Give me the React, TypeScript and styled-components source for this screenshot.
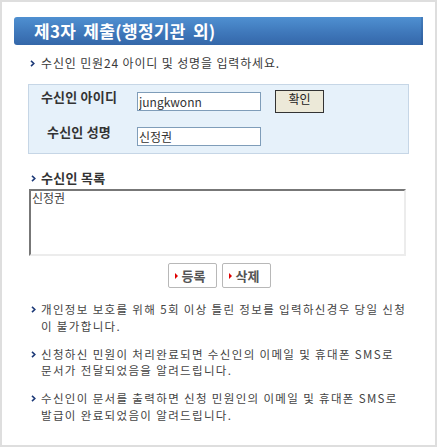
import React from 'react';
import styled, { createGlobalStyle } from 'styled-components';

const GlobalStyle = createGlobalStyle`
  html, body {
    margin: 0;
    padding: 0;
    background: #fff;
  }
  body {
    font-family: "Noto Sans CJK KR", "Noto Sans", sans-serif;
    font-size: 12px;
    color: #333;
  }
`;

const Frame = styled.div`
  box-sizing: border-box;
  width: 437px;
  height: 447px;
  border: 2px solid #dedede;
  padding: 15px 12px 0;
`;

const TitleBar = styled.div`
  height: 28px;
  border-radius: 3px 0 0 3px;
  background: linear-gradient(to bottom, #4f90d1 0%, #3f78bb 55%, #3467a9 100%);
  box-shadow: inset -2px 0 0 rgba(20, 50, 100, 0.18);
  display: flex;
  align-items: center;
  padding-left: 20px;
`;

const Title = styled.h1`
  margin: 0;
  font-size: 17px;
  font-weight: 700;
  color: #fff;
  letter-spacing: 0.3px;
  word-spacing: 3px;
  line-height: 28px;
`;

const Content = styled.div`
  margin: 0 14px;
`;

const Bulleted = styled.div<{ $bold?: boolean; $mt?: number }>`
  display: flex;
  align-items: flex-start;
  margin-top: ${p => p.$mt ?? 0}px;
  font-size: ${p => (p.$bold ? 13 : 12)}px;
  font-weight: ${p => (p.$bold ? 700 : 400)};
  letter-spacing: ${p => (p.$bold ? 0.3 : 0.85)}px;
  color: ${p => (p.$bold ? '#333' : '#3a3a3a')};
  line-height: 16px;
  white-space: nowrap;
`;

const Mark = styled.span<{ $x?: number; $h?: number }>`
  flex: 0 0 13px;
  display: flex;
  align-items: center;
  height: ${p => p.$h ?? 16}px;
  padding-left: ${p => p.$x ?? 2}px;
  box-sizing: border-box;
`;

const Chevron: React.FC<{ x?: number; h?: number }> = ({ x, h }) => (
  <Mark $x={x} $h={h}>
    <svg width="5" height="7" viewBox="0 0 5 7">
      <polyline points="1,0.8 3.8,3.5 1,6.2" fill="none" stroke="#1d3a78" strokeWidth="1.6" />
    </svg>
  </Mark>
);

const FormBox = styled.div`
  margin-top: 13px;
  height: 70px;
  box-sizing: border-box;
  border: 1px solid #c6d6e6;
  background: #e6f1fa;
  padding: 5px 0;
  display: grid;
  grid-template-columns: 100px 124px 49px;
  grid-auto-rows: 23px;
  column-gap: 8px;
  row-gap: 12px;
`;

const Label = styled.label`
  align-self: start;
  text-align: center;
  font-size: 13px;
  font-weight: 700;
  line-height: 14px;
  color: #333;
  letter-spacing: 0.2px;
`;

const TextInput = styled.input`
  align-self: center;
  box-sizing: border-box;
  width: 124px;
  height: 19px;
  margin: 0;
  padding: 0 1px;
  border: 1px solid #7f9db9;
  background: #fff;
  font-family: "Noto Sans CJK KR", "Noto Sans", sans-serif;
  font-size: 12px;
  color: #333;
  outline: none;
`;

const ConfirmButton = styled.button`
  margin-left: 6px;
  box-sizing: border-box;
  width: 49px;
  height: 23px;
  padding: 0 0 6px;
  border: 1px solid #333;
  background: #ece9d8;
  font-family: "Noto Sans CJK KR", "Noto Sans", sans-serif;
  font-size: 12px;
  line-height: 14px;
  color: #222;
`;

const ListBox = styled.textarea`
  display: block;
  box-sizing: border-box;
  margin: 3px 0 0 1px;
  width: 377px;
  height: 67px;
  padding: 0 1px;
  resize: none;
  border: 2px solid;
  border-color: #777 #ececec #ececec #777;
  background: #fff;
  font-family: "Noto Sans CJK KR", "Noto Sans", sans-serif;
  font-size: 12px;
  line-height: 14px;
  color: #444;
  outline: none;
`;

const ButtonRow = styled.div`
  display: flex;
  justify-content: center;
  gap: 5px;
  margin-top: 7px;
  padding-left: 1px;
`;

const ActionButton = styled.button`
  box-sizing: border-box;
  width: 49px;
  height: 25px;
  padding: 0 0 0 6px;
  display: flex;
  align-items: center;
  gap: 4px;
  border: 1px solid #b8b8b8;
  border-radius: 2px;
  background: #fff;
  font-family: "Noto Sans CJK KR", "Noto Sans", sans-serif;
  font-size: 13px;
  font-weight: 700;
  color: #555;
`;

const RedArrow = () => (
  <svg width="3" height="6" viewBox="0 0 3 6">
    <polygon points="0,0 3,3 0,6" fill="#e00000" />
  </svg>
);

const Notes = styled.div`
  margin-top: 13px;
  display: flex;
  flex-direction: column;
  gap: 11px;
`;

const Note = styled.div`
  display: flex;
  align-items: flex-start;
`;

const NoteText = styled.div`
  font-size: 11.5px;
  line-height: 16.8px;
  letter-spacing: 1.35px;
  color: #444;
  white-space: nowrap;
`;

const notes: string[][] = [
  ['개인정보 보호를 위해 5회 이상 틀린 정보를 입력하신경우 당일 신청', '이 불가합니다.'],
  ['신청하신 민원이 처리완료되면 수신인의 이메일 및 휴대폰 SMS로', '문서가 전달되었음을 알려드립니다.'],
  ['수신인이 문서를 출력하면 신청 민원인의 이메일 및 휴대폰 SMS로', '발급이 완료되었음이 알려드립니다.'],
];

const App: React.FC = () => {
  return (
    <>
      <GlobalStyle />
      <Frame>
        <TitleBar>
          <Title>제3자 제출(행정기관 외)</Title>
        </TitleBar>
        <Content>
          <Bulleted $mt={10}>
            <Chevron x={2} />
            수신인 민원24 아이디 및 성명을 입력하세요.
          </Bulleted>

          <FormBox>
            <Label>수신인 아이디</Label>
            <TextInput defaultValue="jungkwonn" />
            <ConfirmButton>확인</ConfirmButton>
            <Label>수신인 성명</Label>
            <TextInput defaultValue="신정권" />
          </FormBox>

          <Bulleted $bold $mt={16}>
            <Chevron x={3} />
            수신인 목록
          </Bulleted>
          <ListBox defaultValue="신정권" />

          <ButtonRow>
            <ActionButton><RedArrow />등록</ActionButton>
            <ActionButton><RedArrow />삭제</ActionButton>
          </ButtonRow>

          <Notes>
            {notes.map((lines, i) => (
              <Note key={i}>
                <Chevron x={3} h={17} />
                <NoteText>
                  {lines[0]}
                  <br />
                  {lines[1]}
                </NoteText>
              </Note>
            ))}
          </Notes>
        </Content>
      </Frame>
    </>
  );
};

export default App;
